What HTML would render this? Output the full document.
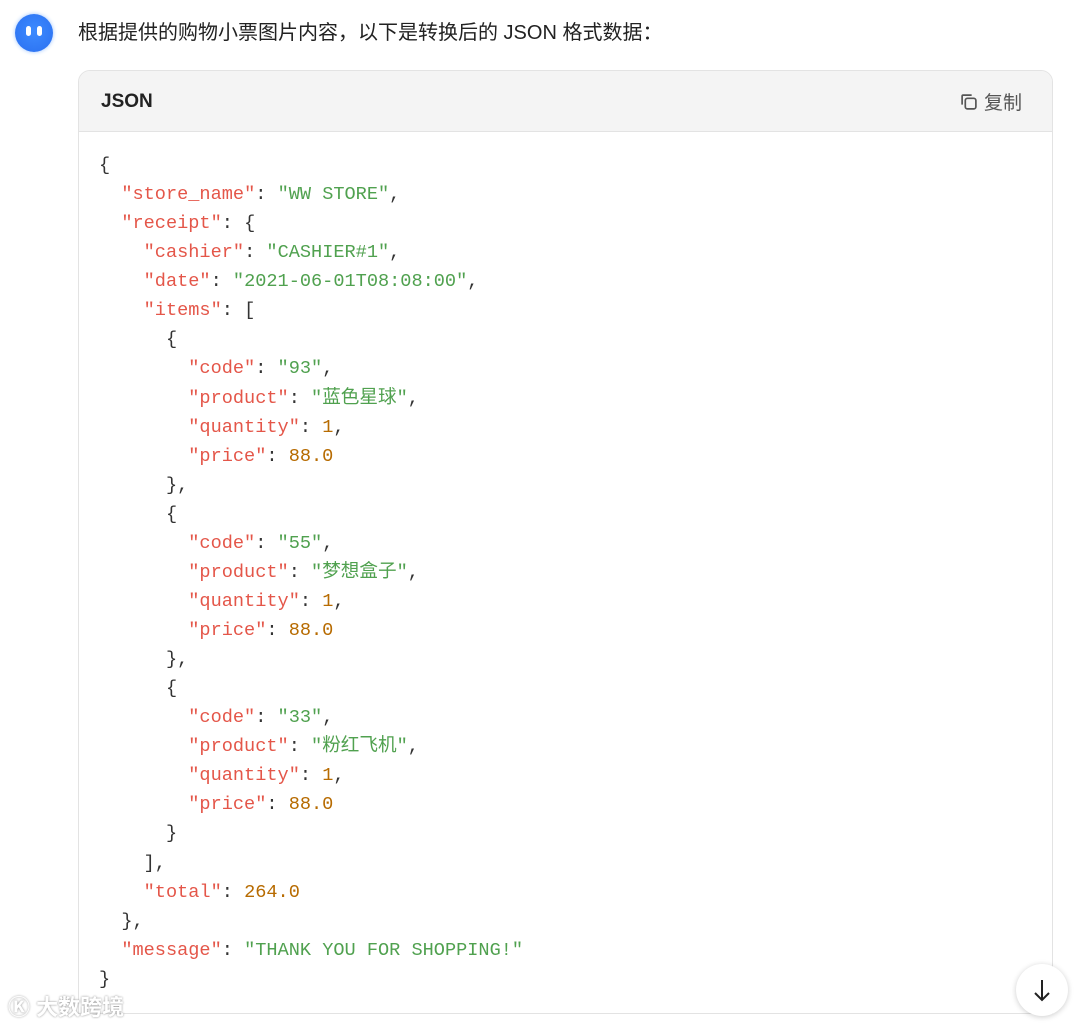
<!DOCTYPE html>
<html><head><meta charset="utf-8"><style>
body{margin:0;width:1080px;height:1023px;background:#fff;overflow:hidden;position:relative;font-family:"Liberation Sans","Noto Sans CJK SC",sans-serif}
.av{position:absolute;left:15px;top:14px;width:38px;height:38px;border-radius:50%;background:radial-gradient(circle at 50% 45%,#3d8bff,#2a6ff0);box-shadow:0 0 4px #9cc4ff}
.av i{position:absolute;top:12px;width:5px;height:10px;border-radius:3px;background:#fff}
.msg{position:absolute;left:78px;top:16px;font-size:20px;color:#222}
.box{position:absolute;left:78px;top:70px;width:973px;height:942px;border:1px solid #e3e3e3;border-radius:12px 12px 0 0;overflow:hidden}
.hd{height:60px;background:#f4f4f4;border-bottom:1px solid #e3e3e3;position:relative}
.hd b{position:absolute;left:22px;top:20px;font-size:19px;color:#222;font-family:"Liberation Sans",sans-serif}
.cp{position:absolute;right:30px;top:17px;font-size:19px;color:#555}
pre{margin:0;position:absolute;left:20px;top:80px;font-family:"Liberation Mono","Noto Sans CJK SC",monospace;font-size:18.6px;line-height:29.07px;color:#333}
.k{color:#e45649}.s{color:#50a14f}.n{color:#b76b01}
.dn{position:absolute;left:1016px;top:964px;width:52px;height:52px;border-radius:50%;background:#fff;box-shadow:0 1px 6px rgba(0,0,0,.2)}
.wm{position:absolute;left:8px;top:990px;font-size:22px;color:#fff;text-shadow:0 0 2px #888;font-weight:bold}
</style></head><body>
<div class="av"><i style="left:11px"></i><i style="left:22px"></i></div>
<div class="msg">根据提供的购物小票图片内容，以下是转换后的 JSON 格式数据：</div>
<div class="box"><div class="hd"><b>JSON</b><div class="cp"><svg width="18" height="18" viewBox="0 0 17 17" style="vertical-align:-2px;margin-right:6px" fill="none" stroke="#555" stroke-width="1.6"><rect x="5" y="5" width="10" height="10" rx="2"/><path d="M2 11V3a1 1 0 0 1 1-1h8"/></svg>复制</div></div>
<pre>{
  <span class="k">"store_name"</span>: <span class="s">"WW STORE"</span>,
  <span class="k">"receipt"</span>: {
    <span class="k">"cashier"</span>: <span class="s">"CASHIER#1"</span>,
    <span class="k">"date"</span>: <span class="s">"2021-06-01T08:08:00"</span>,
    <span class="k">"items"</span>: [
      {
        <span class="k">"code"</span>: <span class="s">"93"</span>,
        <span class="k">"product"</span>: <span class="s">"蓝色星球"</span>,
        <span class="k">"quantity"</span>: <span class="n">1</span>,
        <span class="k">"price"</span>: <span class="n">88.0</span>
      },
      {
        <span class="k">"code"</span>: <span class="s">"55"</span>,
        <span class="k">"product"</span>: <span class="s">"梦想盒子"</span>,
        <span class="k">"quantity"</span>: <span class="n">1</span>,
        <span class="k">"price"</span>: <span class="n">88.0</span>
      },
      {
        <span class="k">"code"</span>: <span class="s">"33"</span>,
        <span class="k">"product"</span>: <span class="s">"粉红飞机"</span>,
        <span class="k">"quantity"</span>: <span class="n">1</span>,
        <span class="k">"price"</span>: <span class="n">88.0</span>
      }
    ],
    <span class="k">"total"</span>: <span class="n">264.0</span>
  },
  <span class="k">"message"</span>: <span class="s">"THANK YOU FOR SHOPPING!"</span>
}</pre></div>
<div class="dn"><svg width="52" height="52" viewBox="0 0 52 52" fill="none" stroke="#222" stroke-width="2"><path d="M26 16v20M19 29l7 7 7-7"/></svg></div>
<div class="wm">Ⓚ 大数跨境</div>
</body></html>
